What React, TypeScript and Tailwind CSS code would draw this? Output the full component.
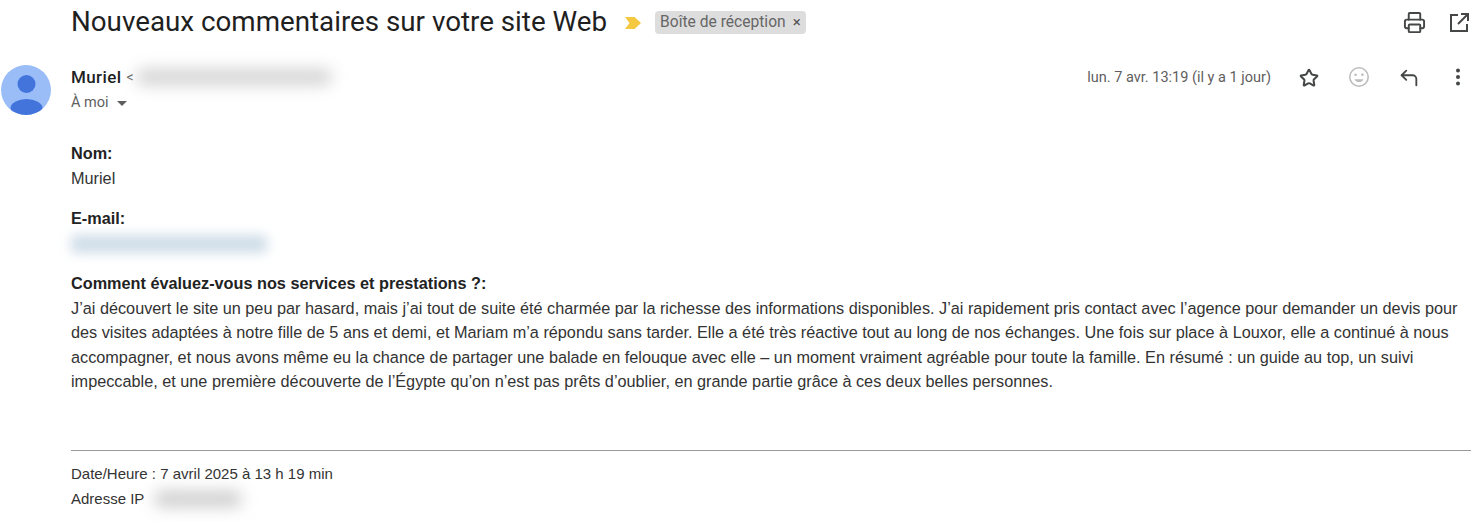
import { CornerUpLeft, Printer, Star } from "lucide-react";

const body =
  "J’ai découvert le site un peu par hasard, mais j’ai tout de suite été charmée par la richesse des informations disponibles. J’ai rapidement pris contact avec l’agence pour demander un devis pour des visites adaptées à notre fille de 5 ans et demi, et Mariam m’a répondu sans tarder. Elle a été très réactive tout au long de nos échanges. Une fois sur place à Louxor, elle a continué à nous accompagner, et nous avons même eu la chance de partager une balade en felouque avec elle – un moment vraiment agréable pour toute la famille. En résumé : un guide au top, un suivi impeccable, et une première découverte de l’Égypte qu’on n’est pas prêts d’oublier, en grande partie grâce à ces deux belles personnes.";

function Avatar() {
  return (
    <svg viewBox="0 0 50 50" className="h-[50px] w-[50px] shrink-0">
      <defs>
        <clipPath id="avatar-clip">
          <circle cx="25" cy="25" r="25" />
        </clipPath>
      </defs>
      <circle cx="25" cy="25" r="25" fill="#9abdf7" />
      <g clipPath="url(#avatar-clip)" fill="#4274dc">
        <circle cx="25.5" cy="19" r="9" />
        <ellipse cx="25.5" cy="43" rx="16" ry="9" />
      </g>
    </svg>
  );
}

function Smiley() {
  return (
    <svg viewBox="0 0 24 24" className="h-[24px] w-[24px]" fill="none">
      <circle cx="12" cy="12" r="9.2" stroke="#bdbdbd" strokeWidth="1.6" />
      <circle cx="8.6" cy="9.8" r="1.3" fill="#bdbdbd" />
      <circle cx="15.4" cy="9.8" r="1.3" fill="#bdbdbd" />
      <path d="M7.4 14.2c1 1.9 2.7 2.9 4.6 2.9s3.6-1 4.6-2.9z" fill="#bdbdbd" />
    </svg>
  );
}

function OpenInNew() {
  return (
    <svg viewBox="0 0 24 24" className="h-6 w-6" fill="none" stroke="#444746" strokeWidth="2">
      <path d="M11 4H4v16h16v-7" />
      <path d="M14 3h7v7" />
      <path d="M21 3 11 13" />
    </svg>
  );
}

function Dots() {
  return (
    <svg viewBox="0 0 24 24" className="h-6 w-6" fill="#444746">
      <circle cx="12" cy="5.5" r="2" />
      <circle cx="12" cy="12" r="2" />
      <circle cx="12" cy="18.5" r="2" />
    </svg>
  );
}

export default function App() {
  return (
    <div className="h-[522px] w-[1475px] overflow-hidden bg-white font-['Liberation_Sans',sans-serif] text-[16.25px] text-[#333]">
      <div className="flex h-[45px] items-center pl-[71px] pr-[4px]">
        <h1 className="-mt-[2px] font-['Roboto',sans-serif] text-[27.75px] font-normal leading-[45px] text-[#1f1f1f]">
          Nouveaux commentaires sur votre site Web
        </h1>
        <svg viewBox="0 0 16 12" className="ml-[18px] h-[12px] w-[16px]">
          <path d="M0 0h9.5L16 6l-6.5 6H0l4.5-6z" fill="#f5c842" />
        </svg>
        <span className="ml-[14px] flex h-[23px] items-center rounded-[4px] bg-[#dddddd] pl-[5px] pr-[5px] font-['Roboto',sans-serif] text-[15.6px] text-[#666]">
          Boîte de réception
          <span className="ml-[7px] text-[15px] leading-none text-[#555]">×</span>
        </span>
        <div className="ml-auto flex items-center gap-[21px]">
          <Printer size={23} strokeWidth={2} className="text-[#444746]" />
          <OpenInNew />
        </div>
      </div>

      <div className="mt-[20px] flex pl-px">
        <Avatar />
        <div className="ml-[20px] flex-1">
          <div className="flex h-[24px] items-center font-['Roboto',sans-serif]">
            <span className="mt-[1px] text-[17px] font-medium tracking-[0.4px] text-[#1f1f1f]">Muriel</span>
            <span className="ml-[5px] mt-[1px] text-[14px] text-[#5e5e5e]">&lt;</span>
            <span className="ml-[2px] h-[16px] w-[196px] rounded-full bg-[#d2d2d2] blur-[8px]" />
            <span className="ml-auto mt-[1px] text-[14.5px] text-[#5e5e5e]">lun. 7 avr. 13:19 (il y a 1 jour)</span>
            <div className="ml-[28px] mr-[5px] flex items-center">
              <Star size={20} strokeWidth={2.4} className="mt-[2px] text-[#444746]" />
              <div className="ml-[28px]">
                <Smiley />
              </div>
              <CornerUpLeft size={22} strokeWidth={2} className="ml-[27px] mt-[2px] text-[#444746]" />
              <div className="ml-[26px]">
                <Dots />
              </div>
            </div>
          </div>
          <div className="mt-[2px] flex h-[24px] items-center font-['Roboto',sans-serif] text-[14.5px] text-[#5e5e5e]">
            À moi
            <span className="ml-[8px] mt-[1px] h-0 w-0 border-x-[5px] border-t-[5px] border-x-transparent border-t-[#5e5e5e]" />
          </div>
        </div>
      </div>

      <div className="mt-[26px] pl-[71px] pr-[4px] leading-[24px]">
        <div className="h-[25px] font-bold text-[#222]">Nom:</div>
        <div>Muriel</div>
        <div className="mt-[16px] font-bold text-[#222]">E-mail:</div>
        <div className="flex h-[24px] items-center">
          <span className="mt-[3px] h-[18px] w-[196px] rounded-sm bg-[#cfdde8] blur-[6px]" />
        </div>
        <div className="mt-[17px] font-bold text-[#222]">Comment évaluez-vous nos services et prestations ?:</div>
        <p className="mt-px leading-[24.4px]">{body}</p>
        <hr className="mt-[56px] border-t border-[#999]" />
        <div className="mt-[11px] text-[15px]">Date/Heure : 7 avril 2025 à 13 h 19 min</div>
        <div className="mt-px flex items-center text-[15px]">
          Adresse IP
          <span className="ml-[10px] h-[16px] w-[88px] rounded-full bg-[#cccccc] blur-[8px]" />
        </div>
      </div>
    </div>
  );
}
